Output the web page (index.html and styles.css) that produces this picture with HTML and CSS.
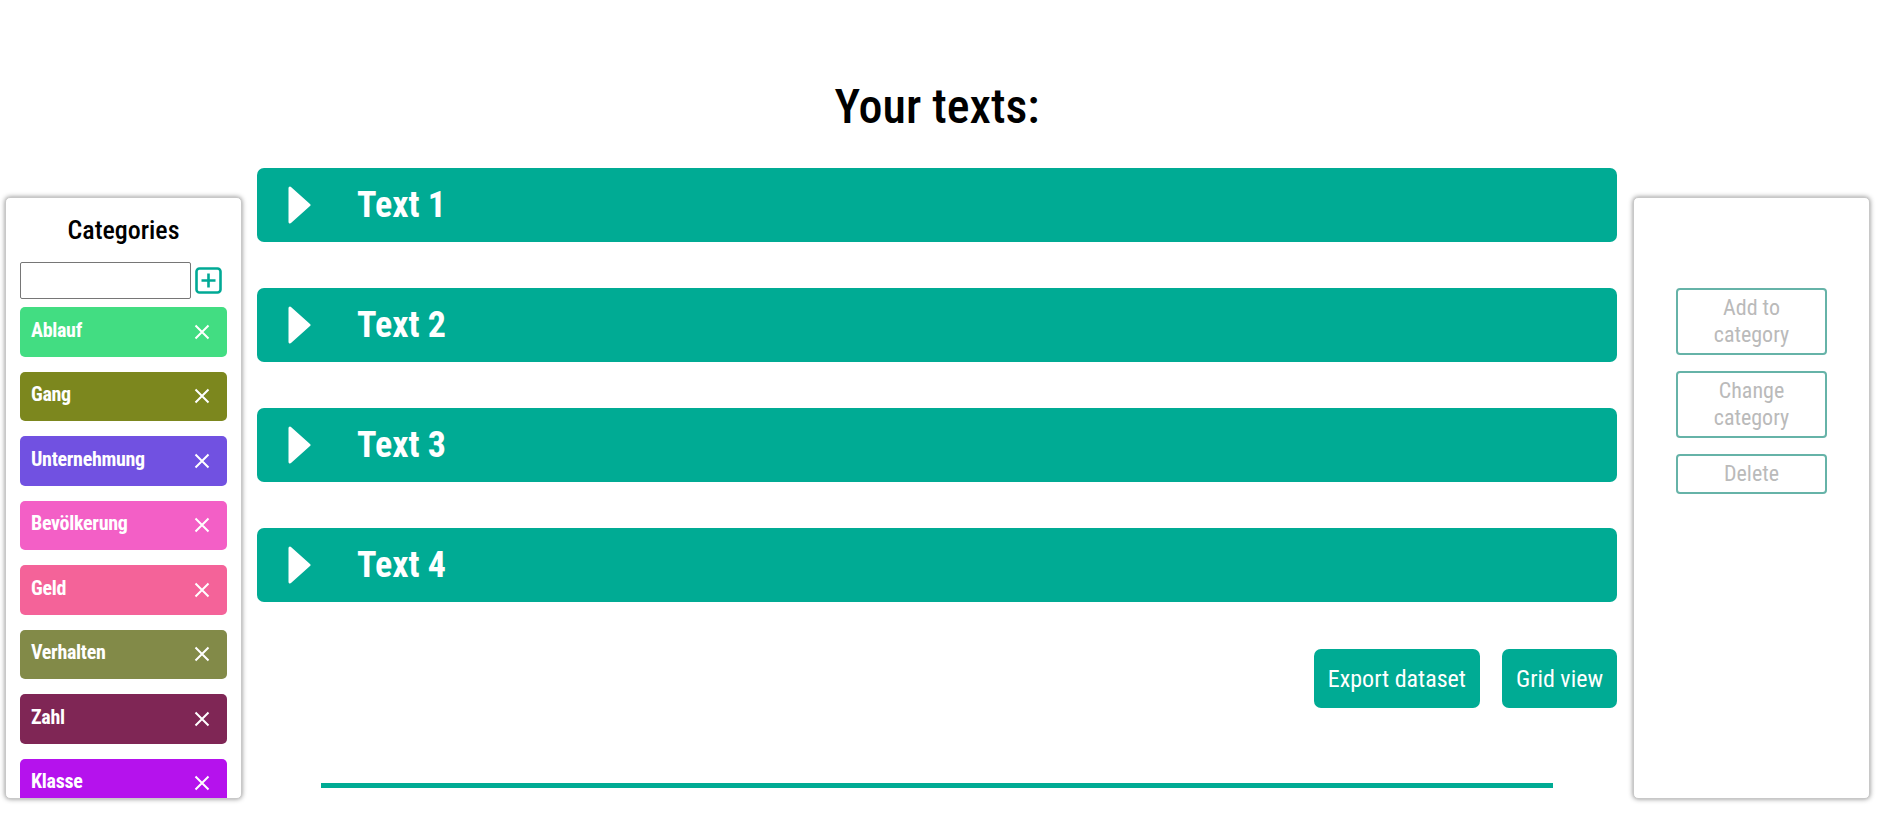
FILE: index.html
```html
<!DOCTYPE html>
<html lang="en">
<head>
<meta charset="utf-8">
<title>Your texts</title>
<link rel="stylesheet" href="styles.css">
</head>
<body>
<div class="page">
  <aside class="panel panel-left">
    <h2 class="panel-title">Categories</h2>
    <div class="new-cat">
      <input class="cat-input" type="text">
      <span class="add-btn">
        <svg width="27" height="27" viewBox="0 0 27 27"><rect x="1.5" y="1.5" width="24" height="24" rx="3" fill="none" stroke="#00a995" stroke-width="2.6"/><path d="M13.5 6.5v14M6.5 13.5h14" stroke="#00a995" stroke-width="2.6" fill="none"/></svg>
      </span>
    </div>
    <ul class="cat-list">
      <li class="cat" style="background:#42dd82"><span>Ablauf</span><svg class="x" viewBox="0 0 16 16"><path d="M1.5 1.5l13 13M14.5 1.5l-13 13"/></svg></li>
      <li class="cat" style="background:#7c871e"><span>Gang</span><svg class="x" viewBox="0 0 16 16"><path d="M1.5 1.5l13 13M14.5 1.5l-13 13"/></svg></li>
      <li class="cat" style="background:#7151e1"><span>Unternehmung</span><svg class="x" viewBox="0 0 16 16"><path d="M1.5 1.5l13 13M14.5 1.5l-13 13"/></svg></li>
      <li class="cat" style="background:#f35fc6"><span>Bevölkerung</span><svg class="x" viewBox="0 0 16 16"><path d="M1.5 1.5l13 13M14.5 1.5l-13 13"/></svg></li>
      <li class="cat" style="background:#f46399"><span>Geld</span><svg class="x" viewBox="0 0 16 16"><path d="M1.5 1.5l13 13M14.5 1.5l-13 13"/></svg></li>
      <li class="cat" style="background:#828a48"><span>Verhalten</span><svg class="x" viewBox="0 0 16 16"><path d="M1.5 1.5l13 13M14.5 1.5l-13 13"/></svg></li>
      <li class="cat" style="background:#7f2655"><span>Zahl</span><svg class="x" viewBox="0 0 16 16"><path d="M1.5 1.5l13 13M14.5 1.5l-13 13"/></svg></li>
      <li class="cat" style="background:#b512ed"><span>Klasse</span><svg class="x" viewBox="0 0 16 16"><path d="M1.5 1.5l13 13M14.5 1.5l-13 13"/></svg></li>
    </ul>
  </aside>

  <main class="main">
    <h1 class="title">Your texts:</h1>
    <div class="texts">
      <div class="text-card"><svg class="tri" viewBox="0 0 23 40"><path d="M2 3 L21 20 L2 37 Z"/></svg><span class="text-name">Text 1</span></div>
      <div class="text-card"><svg class="tri" viewBox="0 0 23 40"><path d="M2 3 L21 20 L2 37 Z"/></svg><span class="text-name">Text 2</span></div>
      <div class="text-card"><svg class="tri" viewBox="0 0 23 40"><path d="M2 3 L21 20 L2 37 Z"/></svg><span class="text-name">Text 3</span></div>
      <div class="text-card"><svg class="tri" viewBox="0 0 23 40"><path d="M2 3 L21 20 L2 37 Z"/></svg><span class="text-name">Text 4</span></div>
    </div>
    <div class="actions">
      <button class="btn">Export dataset</button>
      <button class="btn">Grid view</button>
    </div>
    <div class="rule"></div>
  </main>

  <aside class="panel panel-right">
    <button class="side-btn">Add to<br>category</button>
    <button class="side-btn">Change<br>category</button>
    <button class="side-btn">Delete</button>
  </aside>
</div>
</body>
</html>
```

FILE: styles.css
```css
* { box-sizing: border-box; }
html, body { margin: 0; padding: 0; background: #fff; }
body {
  font-family: "Roboto Condensed", Roboto, "Liberation Sans", sans-serif;
  font-stretch: condensed;
  color: #000;
  overflow: hidden;
  height: 814px;
}
.page {
  display: flex;
  align-items: flex-start;
  padding: 0 9px 0 5px;
  gap: 0;
}
.panel {
  width: 237px;
  height: 602px;
  margin-top: 197px;
  background: #fff;
  border: 1px solid #c8c8c8;
  border-radius: 5px;
  box-shadow: 0 0 5px rgba(0,0,0,0.45);
  overflow: hidden;
  flex: none;
}
.panel-left {
  padding: 17px 14px 0 14px;
}
.panel-title {
  margin: 0;
  font-size: 26px;
  line-height: 30px;
  font-weight: 500;
  text-align: center;
}
.new-cat {
  display: flex;
  align-items: center;
  gap: 4px;
  margin-top: 17px;
}
.cat-input {
  width: 171px;
  height: 37px;
  border: 1px solid #767676;
  border-radius: 2px;
  padding: 0 4px;
  margin: 0;
  font: inherit;
}
.add-btn { display: flex; width: 27px; height: 27px; }
.cat-list {
  list-style: none;
  margin: 8px 0 0 0;
  padding: 0;
  display: flex;
  flex-direction: column;
  gap: 15px;
}
.cat {
  height: 49.5px;
  border-radius: 5px;
  display: flex;
  align-items: center;
  justify-content: space-between;
  padding: 0 17px 0 11px;
  color: #fff;
  font-weight: 700;
  font-size: 20px;
  letter-spacing: -0.3px;
  flex: none;
}
.cat span { margin-top: -4px; }
.x {
  width: 16px;
  height: 16px;
  stroke: #fff;
  stroke-width: 2;
  fill: none;
}
.main {
  width: 1360px;
  margin: 0 16px 0 15px;
  flex: none;
}
.title {
  margin: 79px 0 0 0;
  font-size: 48px;
  line-height: 56px;
  font-weight: 500;
  text-align: center;
}
.texts {
  margin-top: 33px;
  display: flex;
  flex-direction: column;
  gap: 46px;
}
.text-card {
  height: 74px;
  background: #00ab94;
  border-radius: 7px;
  display: flex;
  align-items: center;
  padding-left: 31px;
  color: #fff;
}
.tri { width: 23px; height: 40px; fill: #fff; stroke: #fff; stroke-width: 3; stroke-linejoin: round; }
.text-name {
  margin-left: 46px;
  font-size: 36px;
  font-weight: 700;
}
.actions {
  display: flex;
  justify-content: flex-end;
  gap: 22px;
  margin-top: 47px;
}
.btn {
  height: 59px;
  padding: 0 14px;
  border: none;
  border-radius: 7px;
  background: #00ab94;
  color: #fff;
  font-family: inherit;
  font-stretch: condensed;
  font-size: 24px;
  font-weight: 400;
}
.rule {
  height: 5px;
  background: #00ab94;
  margin: 75px 64px 0 64px;
}
.panel-right {
  display: flex;
  flex-direction: column;
  align-items: center;
  gap: 16px;
  padding-top: 90px;
}
.side-btn {
  width: 151px;
  border: 2px solid #66b3a8;
  border-radius: 4px;
  background: #fff;
  color: #bababa;
  font-family: inherit;
  font-stretch: condensed;
  font-weight: 400;
  font-size: 22px;
  line-height: 27px;
  padding: 4px 0 5px 0;
}
```
